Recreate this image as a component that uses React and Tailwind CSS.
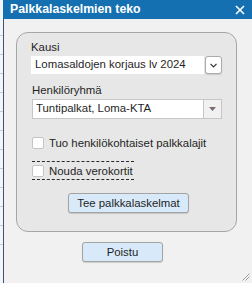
import { useState } from 'react'

const TICKS = [35, 55, 74, 94, 114, 133, 153, 173, 192, 212, 232, 252, 271]

function Check({ label, checked, onChange }) {
  return (
    <label className="flex items-center gap-[5px] h-[12px] leading-[12px] cursor-pointer whitespace-nowrap">
      <input type="checkbox" checked={checked} onChange={onChange} className="hidden" />
      <span className="shrink-0 w-[12px] h-[12px] bg-white border border-[#c4c4c4] rounded-[2px]" />
      <span>{label}</span>
    </label>
  )
}

export default function App() {
  const [tuo, setTuo] = useState(false)
  const [nouda, setNouda] = useState(false)

  return (
    <div
      className="w-[252px] h-[283px] bg-[#f4f5f6] flex text-[11.4px] text-[#1f1f1f] whitespace-nowrap overflow-hidden"
      style={{ fontFamily: '"Liberation Sans", Arial, sans-serif' }}
    >
      {/* page behind the dialog */}
      <div className="w-[3px] shrink-0 flex flex-col">
        <div className="h-[35px]" />
        {TICKS.slice(1).map((t, i) => (
          <div key={t} className="h-[19px] border-t border-[#c9ced6]" />
        ))}
      </div>

      <div className="flex-1 flex flex-col bg-[#f1f1f1]">
        {/* Title bar */}
        <div className="h-[19px] shrink-0 bg-[#1470b1] flex items-center justify-between pl-[7px] pr-[7px] text-white">
          <span className="font-bold text-[12.3px] leading-[19px]">Palkkalaskelmien teko</span>
          <svg width="10" height="10" viewBox="0 0 10 10" stroke="white" strokeWidth="1.6">
            <path d="M1 1 L9 9 M9 1 L1 9" />
          </svg>
        </div>

        <div className="flex-1 flex flex-col items-start border-l border-[#3b5576] relative">
          {/* Panel */}
          <div className="mt-[13px] ml-[12px] w-[221px] h-[200px] shrink-0 bg-[#e7e7e7] border border-[#a6a6a6] rounded-[12px] pl-[14px] pt-[8px]">
            <div className="leading-[13px]">Kausi</div>
            <div className="flex items-center gap-[1px] mt-[2px]">
              <div className="w-[173px] h-[18px] bg-white flex items-center pl-[4px]">Lomasaldojen korjaus lv 2024</div>
              <div className="w-[17px] h-[18px] bg-white border border-[#ababab] rounded-[3px] shadow-[0_1px_1px_rgba(0,0,0,0.12)] flex items-center justify-center">
                <svg width="7" height="5" viewBox="0 0 7 5" fill="none" stroke="#333" strokeWidth="1.2">
                  <path d="M0.5 0.8 L3.5 3.8 L6.5 0.8" />
                </svg>
              </div>
            </div>

            <div className="leading-[13px] mt-[10px] ml-[1px]">Henkilöryhmä</div>
            <div className="flex mt-[2px] ml-[1px] w-[190px] h-[20px] bg-white border border-[#c6c6c6]">
              <div className="flex-1 flex items-center pl-[3px]">Tuntipalkat, Loma-KTA</div>
              <div className="w-[18px] border-l border-[#c6c6c6] bg-[#f1f1f1] flex items-center justify-center">
                <svg width="7" height="4" viewBox="0 0 7 4">
                  <defs>
                    <linearGradient id="tri" x1="0" y1="0" x2="0" y2="1">
                      <stop offset="0" stopColor="#8a6e66" />
                      <stop offset="1" stopColor="#4f6a98" />
                    </linearGradient>
                  </defs>
                  <path d="M0 0 L7 0 L3.5 4 Z" fill="url(#tri)" />
                </svg>
              </div>
            </div>

            <div className="mt-[18px] ml-[1px]">
              <Check label="Tuo henkilökohtaiset palkkalajit" checked={tuo} onChange={() => setTuo(!tuo)} />
            </div>

            <div className="mt-[12px] ml-[1px] w-[102px] border-y border-dashed border-[#2a2a2a] pt-[3px] pb-[2px]">
              <Check label="Nouda verokortit" checked={nouda} onChange={() => setNouda(!nouda)} />
            </div>

            <button className="mt-[13px] ml-[37px] w-[121px] h-[20px] leading-[18px] bg-[#d8eaf9] border border-[#a3a3a3] rounded-[3px] shadow-[0_1px_1px_rgba(0,0,0,0.15)]">
              Tee palkkalaskelmat
            </button>
          </div>

          <button className="mt-[10px] ml-[78px] shrink-0 w-[81px] h-[20px] leading-[18px] bg-[#d8eaf9] border border-[#a3a3a3] rounded-[3px] shadow-[0_1px_1px_rgba(0,0,0,0.15)]">
            Poistu
          </button>

          <svg width="8" height="8" viewBox="0 0 8 8" className="absolute right-[2px] bottom-[2px]" stroke="#a0a0a0" strokeWidth="1">
            <path d="M7.5 0.5 L0.5 7.5 M7.5 3.5 L3.5 7.5" />
          </svg>
        </div>
      </div>
    </div>
  )
}
